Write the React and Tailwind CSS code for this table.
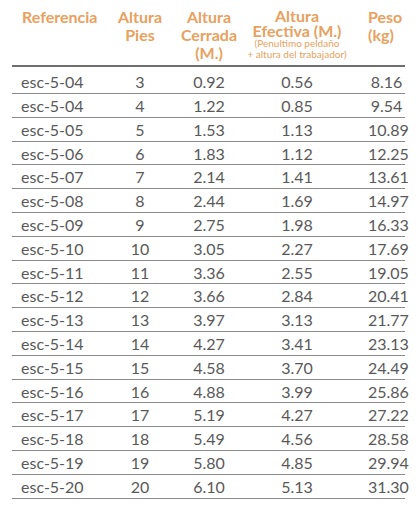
import React from 'react';

const rows = [
  ['esc-5-04', '3', '0.92', '0.56', '8.16'],
  ['esc-5-04', '4', '1.22', '0.85', '9.54'],
  ['esc-5-05', '5', '1.53', '1.13', '10.89'],
  ['esc-5-06', '6', '1.83', '1.12', '12.25'],
  ['esc-5-07', '7', '2.14', '1.41', '13.61'],
  ['esc-5-08', '8', '2.44', '1.69', '14.97'],
  ['esc-5-09', '9', '2.75', '1.98', '16.33'],
  ['esc-5-10', '10', '3.05', '2.27', '17.69'],
  ['esc-5-11', '11', '3.36', '2.55', '19.05'],
  ['esc-5-12', '12', '3.66', '2.84', '20.41'],
  ['esc-5-13', '13', '3.97', '3.13', '21.77'],
  ['esc-5-14', '14', '4.27', '3.41', '23.13'],
  ['esc-5-15', '15', '4.58', '3.70', '24.49'],
  ['esc-5-16', '16', '4.88', '3.99', '25.86'],
  ['esc-5-17', '17', '5.19', '4.27', '27.22'],
  ['esc-5-18', '18', '5.49', '4.56', '28.58'],
  ['esc-5-19', '19', '5.80', '4.85', '29.94'],
  ['esc-5-20', '20', '6.10', '5.13', '31.30'],
];

const cols = 'grid grid-cols-[96px_64px_74px_102px_57px]';

export default function App() {
  return (
    <div className="w-[419px] h-[511px] bg-white overflow-hidden pl-[12px] pt-[8px]" style={{ fontFamily: 'Lato, "Open Sans", sans-serif' }}>
      {/* header */}
      <div className={`${cols} h-[57px] text-[#e8a15e] font-bold text-[16px] leading-[18px]`}>
        <div className="pl-[10px]">Referencia</div>
        <div className="text-center">Altura<br />Pies</div>
        <div className="text-center">Altura<br />Cerrada<br />(M.)</div>
        <div className="text-center">
          <div className="leading-[15px]">Altura</div>
          <div className="leading-[15px]">Efectiva (M.)</div>
          <div className="font-normal text-[10px] leading-[11px]">(Penultimo peldaño<br />+ altura del trabajador)</div>
        </div>
        <div className="pl-[20px]">Peso<br />(kg)</div>
      </div>
      <div className="w-[393px] h-[2px] bg-[#6f6f6f]" />
      {/* body */}
      <div className="w-[393px] text-[#595959] text-[16px]">
        {rows.map((r, i) => (
          <div key={i} className={`${cols} items-center border-b border-[#8a8a8a] ${i === 0 ? 'h-[27px] pt-[3px]' : 'h-[23.8px]'}`}>
            <div className="pl-[9px]">{r[0]}</div>
            <div className="text-center">{r[1]}</div>
            <div className="text-center">{r[2]}</div>
            <div className="text-center">{r[3]}</div>
            <div className="text-center pl-[20px]">{r[4]}</div>
          </div>
        ))}
      </div>
    </div>
  );
}
